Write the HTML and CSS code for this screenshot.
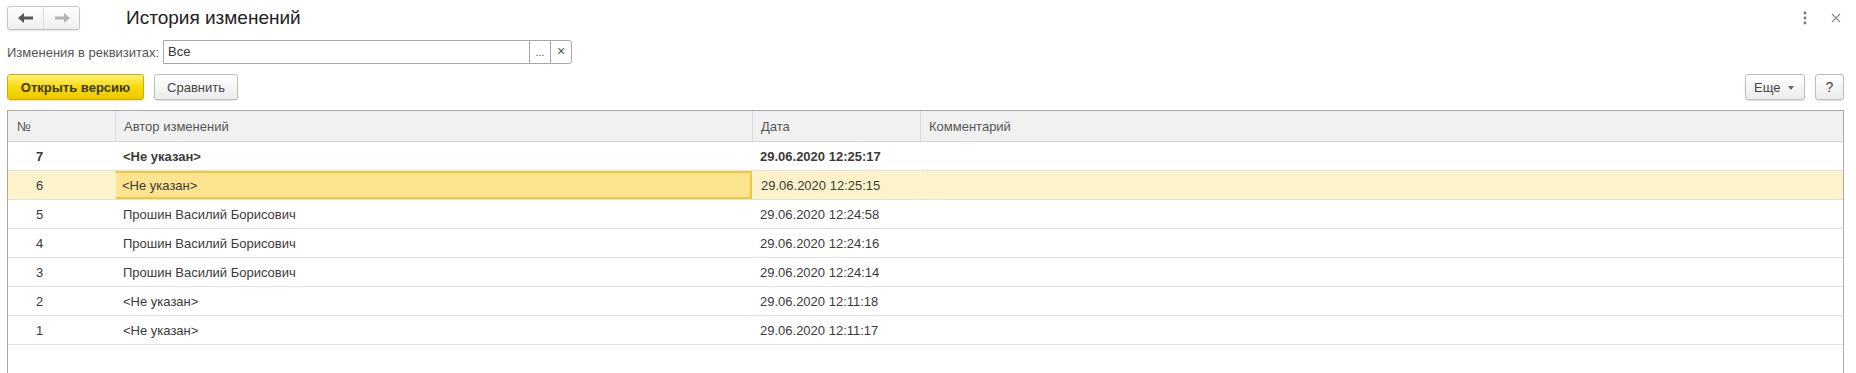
FILE: index.html
```html
<!DOCTYPE html>
<html lang="ru">
<head>
<meta charset="utf-8">
<title>История изменений</title>
<link rel="stylesheet" href="styles.css">
</head>
<body>
<div class="page">
  <header class="topbar">
    <div class="nav">
      <button class="nav-btn back" aria-label="Назад">
        <svg width="16" height="10" viewBox="0 0 16 10"><path d="M0 5 L6 0 L6 3.5 L15 3.5 L15 6.5 L6 6.5 L6 10 Z" fill="#555"/></svg>
      </button>
      <button class="nav-btn fwd" aria-label="Вперед">
        <svg width="16" height="10" viewBox="0 0 16 10"><path d="M16 5 L10 0 L10 3.5 L1 3.5 L1 6.5 L10 6.5 L10 10 Z" fill="#b4b4b4"/></svg>
      </button>
    </div>
    <h1 class="title">История изменений</h1>
    <div class="win-icons">
      <svg class="dots" width="4" height="14" viewBox="0 0 4 14"><circle cx="2" cy="2" r="1.4" fill="#777"/><circle cx="2" cy="7" r="1.4" fill="#777"/><circle cx="2" cy="12" r="1.4" fill="#777"/></svg>
      <svg class="close" width="10" height="10" viewBox="0 0 10 10"><path d="M1 1 L9 9 M9 1 L1 9" stroke="#888" stroke-width="1.1"/></svg>
    </div>
  </header>

  <div class="filter">
    <span class="filter-label">Изменения в реквизитах:</span>
    <div class="field">
      <span class="field-value">Все</span>
      <span class="field-btn">...</span>
      <span class="field-btn clear">×</span>
    </div>
  </div>

  <div class="toolbar">
    <button class="btn primary">Открыть версию</button>
    <button class="btn">Сравнить</button>
    <div class="spacer"></div>
    <button class="btn more">Еще <span class="caret"></span></button>
    <button class="btn help">?</button>
  </div>

  <div class="table">
    <div class="row head">
      <div class="cell">№</div>
      <div class="cell">Автор изменений</div>
      <div class="cell">Дата</div>
      <div class="cell">Комментарий</div>
    </div>
    <div class="row bold">
      <div class="cell num">7</div>
      <div class="cell">&lt;Не указан&gt;</div>
      <div class="cell">29.06.2020 12:25:17</div>
      <div class="cell"></div>
    </div>
    <div class="row selected">
      <div class="cell num">6</div>
      <div class="cell focus">&lt;Не указан&gt;</div>
      <div class="cell">29.06.2020 12:25:15</div>
      <div class="cell"></div>
    </div>
    <div class="row">
      <div class="cell num">5</div>
      <div class="cell">Прошин Василий Борисович</div>
      <div class="cell">29.06.2020 12:24:58</div>
      <div class="cell"></div>
    </div>
    <div class="row">
      <div class="cell num">4</div>
      <div class="cell">Прошин Василий Борисович</div>
      <div class="cell">29.06.2020 12:24:16</div>
      <div class="cell"></div>
    </div>
    <div class="row">
      <div class="cell num">3</div>
      <div class="cell">Прошин Василий Борисович</div>
      <div class="cell">29.06.2020 12:24:14</div>
      <div class="cell"></div>
    </div>
    <div class="row">
      <div class="cell num">2</div>
      <div class="cell">&lt;Не указан&gt;</div>
      <div class="cell">29.06.2020 12:11:18</div>
      <div class="cell"></div>
    </div>
    <div class="row">
      <div class="cell num">1</div>
      <div class="cell">&lt;Не указан&gt;</div>
      <div class="cell">29.06.2020 12:11:17</div>
      <div class="cell"></div>
    </div>
    <div class="filler"></div>
  </div>
</div>
</body>
</html>
```

FILE: styles.css
```css
* { box-sizing: border-box; }
html, body { margin: 0; padding: 0; background: #fff; }
body {
  font-family: "Liberation Sans", Arial, sans-serif;
  font-size: 13px;
  color: #3a3a3a;
  overflow: hidden;
  height: 373px;
}
.page {
  padding: 6px 12px 0 7px;
  display: flex;
  flex-direction: column;
}
button { font-family: inherit; font-size: 13px; cursor: default; }

.topbar {
  display: flex;
  align-items: center;
  height: 24px;
}
.nav {
  display: flex;
  width: 73px;
  height: 24px;
  border: 1px solid #c6c6c6;
  border-radius: 3px;
  background: linear-gradient(#ffffff, #efefef);
  box-shadow: 0 1px 1px rgba(0,0,0,0.12);
}
.nav-btn {
  flex: 1;
  border: 0;
  background: transparent;
  padding: 0;
  display: flex;
  align-items: center;
  justify-content: center;
}
.nav-btn.back { border-right: 1px solid #dcdcdc; }
.title {
  margin: 0 0 0 46px;
  font-size: 19px;
  font-weight: normal;
  color: #222;
  flex: 1;
  line-height: 24px;
}
.win-icons {
  display: flex;
  align-items: center;
  gap: 24px;
  padding-right: 3px;
}

.filter {
  display: flex;
  align-items: center;
  margin-top: 10px;
  height: 24px;
}
.filter-label { color: #555; width: 156px; }
.field {
  display: flex;
  width: 409px;
  height: 24px;
  border: 1px solid #a8a8a8;
  border-radius: 0 3px 3px 0;
}
.field-value {
  flex: 1;
  padding-left: 4px;
  line-height: 22px;
  color: #333;
}
.field-btn {
  width: 21px;
  border-left: 1px solid #a8a8a8;
  text-align: center;
  line-height: 22px;
  font-size: 11px;
  color: #555;
}
.field-btn.clear { font-size: 14px; line-height: 21px; }

.toolbar {
  display: flex;
  align-items: center;
  gap: 10px;
  margin-top: 10px;
  height: 26px;
}
.spacer { flex: 1; }
.btn {
  height: 26px;
  border: 1px solid #bdbdbd;
  border-radius: 3px;
  background: linear-gradient(#ffffff, #ececec);
  box-shadow: 0 1px 1px rgba(0,0,0,0.12);
  color: #444;
  padding: 0 12px;
}
.btn.primary {
  width: 137px;
  font-weight: bold;
  color: #3a3a1c;
  border-color: #d0ae00;
  background: linear-gradient(#fff27a, #f7d800 55%, #f0c800);
}
.btn:nth-child(2) { width: 84px; }
.btn.more { width: 60px; padding: 0 0 0 8px; text-align: left; }
.caret {
  display: inline-block;
  width: 0; height: 0;
  border-left: 3px solid transparent;
  border-right: 3px solid transparent;
  border-top: 4px solid #666;
  margin-left: 4px;
  vertical-align: middle;
}
.btn.help { width: 29px; padding: 0; font-size: 14px; }

.table {
  margin-top: 10px;
  border: 1px solid #a8a8a8;
  border-bottom: 0;
  display: flex;
  flex-direction: column;
}
.row {
  display: grid;
  grid-template-columns: 107px 637px 168px 1fr;
  height: 29px;
  border-bottom: 1px solid #e2e2e2;
  align-items: stretch;
}
.cell {
  padding-left: 8px;
  display: flex;
  align-items: center;
  white-space: nowrap;
}
.row.head {
  height: 31px;
  background: #f1f1f1;
  border-bottom: 1px solid #d6d6d6;
  color: #555;
}
.row.head .cell { border-left: 1px solid #dcdcdc; }
.row.head .cell:first-child { border-left: 0; padding-left: 9px; }
.cell.num { padding-left: 28px; }
.row.bold { font-weight: bold; }
.row.selected { background: #fdf2c9; }
.row.selected .cell + .cell { border-left: 1px solid #fff8e2; }
.cell.focus {
  background: #fce491;
  border: 2px solid #efc937;
  padding-left: 6px;
}
.filler { height: 40px; }
```
